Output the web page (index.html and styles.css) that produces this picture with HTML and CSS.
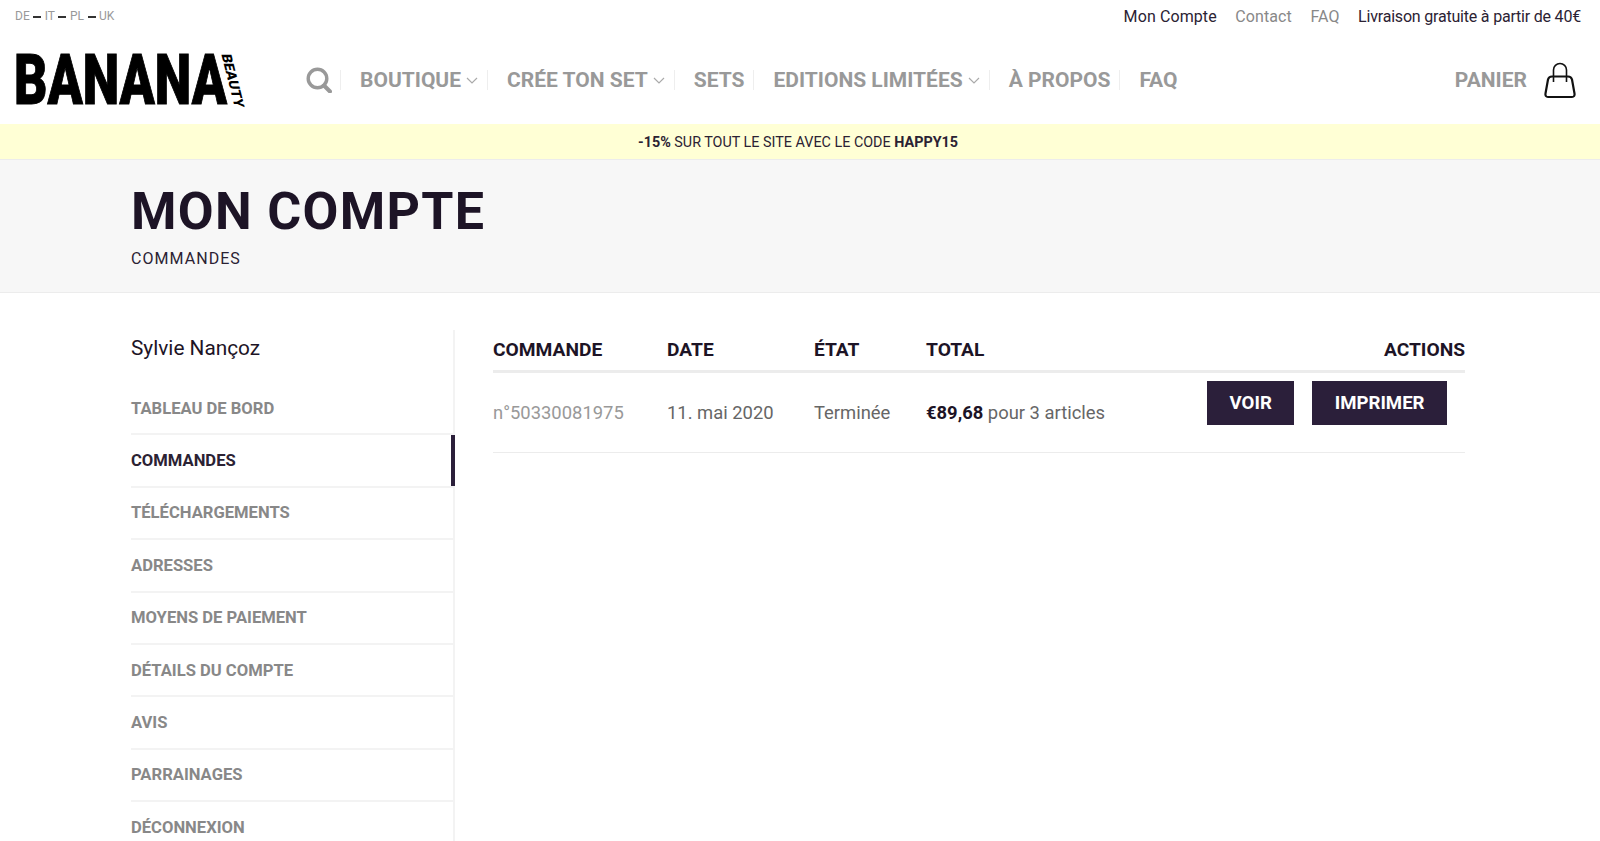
FILE: index.html
```html
<!DOCTYPE html>
<html lang="fr">
  <head>
    <meta charset="UTF-8" />
    <title>Mon Compte</title>
    <link rel="stylesheet" href="styles.css">
  </head>
  <body>
    <div class="topbar">
      <div class="langs">
        <a>DE</a><span class="dash"></span><a>IT</a><span class="dash"></span><a>PL</a><span class="dash"></span><a>UK</a>
      </div>
      <div class="top-links">
        <a class="dark">Mon Compte</a>
        <a>Contact</a>
        <a>FAQ</a>
        <span class="dark shipping">Livraison gratuite à partir de 40€</span>
      </div>
    </div>

    <header class="header">
      <a class="logo">
        <span class="logo-main">BANANA</span>
        <span class="logo-side">BEAUTY</span>
      </a>
      <nav class="nav">
        <a class="nav-item nav-search">
          <svg width="26" height="26" viewBox="0 0 26 26" fill="none" stroke="#999" stroke-width="3.4">
            <circle cx="11.5" cy="11.5" r="9.3" />
            <path d="M18 18.5l6 6" stroke-width="4" stroke-linecap="round" />
          </svg>
        </a>
        <a class="nav-item">BOUTIQUE<svg class="chev" width="12" height="7" viewBox="0 0 12 7"><path d="M1 1l5 5 5-5" /></svg></a>
        <a class="nav-item">CRÉE TON SET<svg class="chev" width="12" height="7" viewBox="0 0 12 7"><path d="M1 1l5 5 5-5" /></svg></a>
        <a class="nav-item">SETS</a>
        <a class="nav-item">EDITIONS LIMITÉES<svg class="chev" width="12" height="7" viewBox="0 0 12 7"><path d="M1 1l5 5 5-5" /></svg></a>
        <a class="nav-item">À PROPOS</a>
        <a class="nav-item">FAQ</a>
      </nav>
      <a class="cart">
        PANIER
        <svg width="32" height="37" viewBox="0 0 32 37" fill="none" stroke="#111" stroke-width="2">
          <path d="M9.5 20V8a6.500 6.500 0 0 1 13 0v12" stroke-width="1.6" />
          <path d="M8 14.500h16c2 0 3.500 1 4 3l2.500 14c.4 2-.5 3.500-2.500 3.500H4c-2 0-2.900-1.500-2.500-3.500l2.500-14c.5-2 2-3 4-3z" stroke-width="2.2" />
        </svg>
      </a>
    </header>

    <div class="promo"><b>-15%</b> SUR TOUT LE SITE AVEC LE CODE <b>HAPPY15</b></div>

    <div class="title-band">
      <h1>MON COMPTE</h1>
      <div class="subtitle">COMMANDES</div>
    </div>

    <main class="account">
      <aside class="sidebar">
        <div class="user-name">Sylvie Nançoz</div>
        <ul class="side-menu">
          <li>TABLEAU DE BORD</li>
          <li class="active">COMMANDES</li>
          <li>TÉLÉCHARGEMENTS</li>
          <li>ADRESSES</li>
          <li>MOYENS DE PAIEMENT</li>
          <li>DÉTAILS DU COMPTE</li>
          <li>AVIS</li>
          <li>PARRAINAGES</li>
          <li>DÉCONNEXION</li>
        </ul>
      </aside>

      <section class="orders">
        <table>
          <thead>
            <tr>
              <th class="col-order">COMMANDE</th>
              <th class="col-date">DATE</th>
              <th class="col-state">ÉTAT</th>
              <th>TOTAL</th>
              <th class="col-actions">ACTIONS</th>
            </tr>
          </thead>
          <tbody>
            <tr>
              <td class="order-num">n°50330081975</td>
              <td>11. mai 2020</td>
              <td>Terminée</td>
              <td><b>€89,68</b> pour 3 articles</td>
              <td class="col-actions">
                <div class="btns">
                  <a class="btn">VOIR</a>
                  <a class="btn">IMPRIMER</a>
                </div>
              </td>
            </tr>
          </tbody>
        </table>
      </section>
    </main>
  </body>
</html>
```

FILE: styles.css
```css
* {
  margin: 0;
  padding: 0;
  box-sizing: border-box;
}

html,
body {
  height: 841px;
  overflow: hidden;
}

body {
  background: #fff;
  font-family: Roboto, Arial, sans-serif;
  color: #777;
}

/* top bar */
.topbar {
  height: 32px;
  padding: 0 19px 0 15px;
  display: flex;
  justify-content: space-between;
  align-items: center;
}

.langs {
  font-size: 12px;
  color: #999;
  display: flex;
  align-items: center;
}

.dash {
  display: inline-block;
  width: 8px;
  height: 2px;
  margin: 2px 3.5px 0;
  background: #333;
}

.top-links {
  display: flex;
  gap: 18.5px;
  font-size: 16px;
  letter-spacing: 0.1px;
  color: #888;
}

.top-links .dark {
  color: #2b2233;
}

.top-links .shipping {
  letter-spacing: -0.2px;
}

/* header */
.header {
  height: 92px;
  padding: 4px 24px 0 14px;
  display: flex;
  align-items: center;
}

.logo {
  position: relative;
  width: 232px;
  height: 52px;
  color: #000;
}

.logo-main {
  display: block;
  font-size: 70px;
  line-height: 52px;
  font-weight: 900;
  transform: scaleX(0.74);
  transform-origin: left center;
  -webkit-text-stroke: 1px #000;
}

.logo-side {
  position: absolute;
  left: 208px;
  top: 0;
  font-size: 14px;
  line-height: 22px;
  font-weight: 900;
  writing-mode: vertical-rl;
  transform: skewX(14deg);
}

.nav {
  margin-left: 60px;
  display: flex;
  align-items: center;
  flex: 1;
}

.nav-item {
  height: 20px;
  padding: 0 9px 0 19px;
  border-right: 1px solid #eee;
  display: flex;
  align-items: center;
  gap: 5px;
  font-size: 21px;
  font-weight: 700;
  color: #999;
}

.nav-item:last-child {
  border-right: none;
}

.nav-search {
  padding: 0 8px 0 0;
}

.chev {
  fill: none;
  stroke: #aaa;
  stroke-width: 1.2;
}

.cart {
  display: flex;
  align-items: center;
  gap: 17px;
  font-size: 21px;
  font-weight: 700;
  color: #999;
}

/* promo */
.promo {
  height: 35px;
  padding: 2px 4px 0 0;
  background: #ffffd5;
  display: flex;
  align-items: center;
  justify-content: center;
  gap: 0.25em;
  font-size: 14.35px;
  color: #2b2233;
}

/* title */
.title-band {
  height: 134px;
  padding: 27px 131px 0;
  background: #f7f7f7;
  border-top: 1px solid #ececec;
  border-bottom: 1px solid #ececec;
}

h1 {
  font-size: 52px;
  line-height: 50px;
  font-weight: 700;
  letter-spacing: 1.3px;
  color: #1d1426;
}

.subtitle {
  margin-top: 12px;
  font-size: 16px;
  letter-spacing: 1.05px;
  color: #2b2233;
}

/* account */
.account {
  padding: 37px 135px 0 131px;
  display: flex;
  gap: 38px;
}

.sidebar {
  width: 324px;
  border-right: 2px solid #f3f3f3;
}

.user-name {
  height: 53px;
  padding-top: 5px;
  font-size: 20.8px;
  line-height: 26px;
  color: #1d1426;
}

.side-menu {
  list-style: none;
}

.side-menu li {
  height: 52.4px;
  display: flex;
  align-items: center;
  border-bottom: 2px solid #f3f3f3;
  margin-right: -2px;
  font-size: 16.6px;
  font-weight: 700;
  color: #888;
}

.side-menu li.active {
  color: #2b2233;
  position: relative;
}

.side-menu li.active::after {
  content: "";
  position: absolute;
  right: 0;
  top: 0;
  bottom: 0;
  width: 4px;
  background: #2b1f3a;
}

.orders {
  flex: 1;
}

table {
  width: 100%;
  border-collapse: collapse;
  table-layout: fixed;
}

th {
  height: 41px;
  text-align: left;
  font-size: 19.2px;
  font-weight: 700;
  color: #1d1426;
  border-bottom: 3px solid #ececec;
}

.col-order {
  width: 174px;
}

.col-date {
  width: 147px;
}

.col-state {
  width: 112px;
}

th.col-actions {
  width: 285px;
  text-align: right;
}

td {
  height: 81px;
  font-size: 18.4px;
  color: #666;
  border-bottom: 1px solid #ececec;
}

td b {
  color: #1d1426;
}

.order-num {
  color: #999;
}

.btns {
  display: flex;
  justify-content: flex-end;
  gap: 18px;
  padding-right: 18px;
  margin-top: -18px;
}

.btn {
  height: 44px;
  padding: 0 22.5px;
  display: flex;
  align-items: center;
  background: #2b1f3a;
  font-size: 18.6px;
  font-weight: 700;
  color: #fff;
}
```
